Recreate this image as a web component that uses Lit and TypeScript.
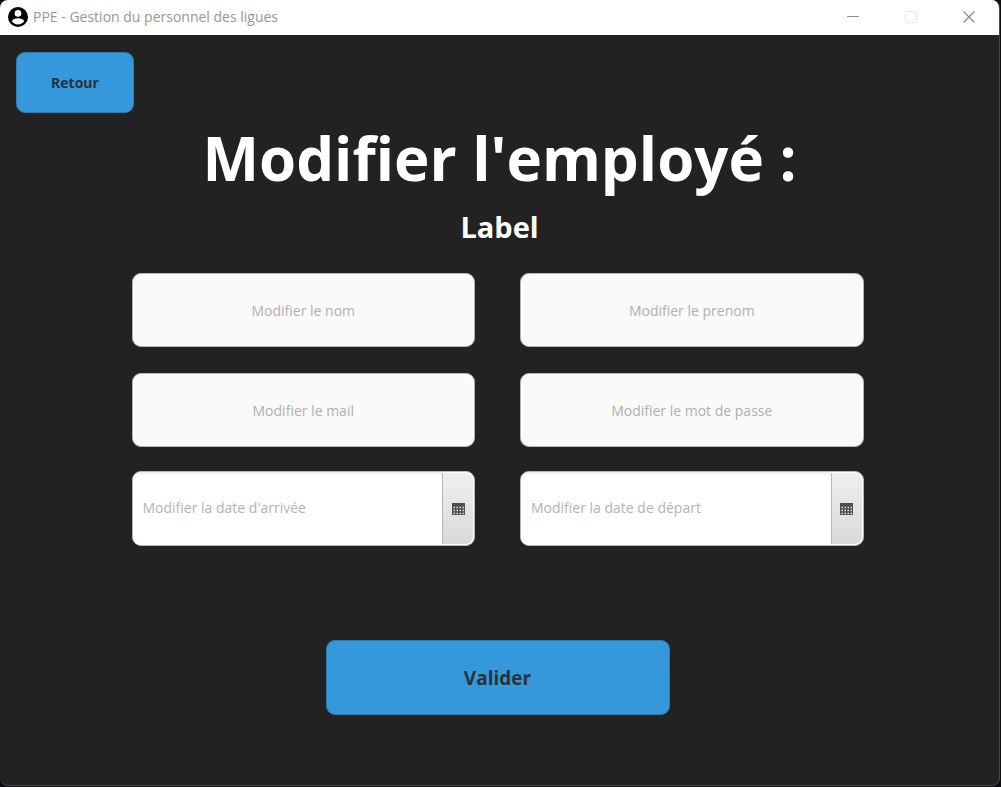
import { LitElement, html, css, svg } from "lit";
import { customElement, property } from "lit/decorators.js";

const calendarDots = [4, 7, 10].flatMap((y) => [2, 5, 8, 11].map((x) => ({ x: x - 0.5, y: y - 0.3 })));

@customElement("date-field")
class DateField extends LitElement {
  @property() label = "";

  static styles = css`
    :host {
      display: block;
    }
    .field {
      display: flex;
      box-sizing: border-box;
      height: 75px;
      border: 1px solid #b5b5b5;
      border-radius: 9px;
      background: #fff;
      overflow: hidden;
    }
    .text {
      flex: 1;
      min-width: 0;
      border: 0;
      padding: 0 10px 2px;
      background: linear-gradient(#ececec, #fff 4px);
      font: 14px "Open Sans", "Noto Sans", sans-serif;
      color: #333;
      outline: none;
    }
    .text::placeholder {
      color: #b3b3b3;
      opacity: 1;
    }
    .pick {
      display: grid;
      place-items: center;
      width: 31px;
      margin: 1px 1px 1px 0;
      padding: 0;
      border: 0;
      border-left: 1px solid #b8b8b8;
      border-radius: 0 8px 8px 0;
      background: linear-gradient(#efefef, #d9d9d9);
    }
    .icon {
      display: block;
    }
  `;

  render() {
    return html`
      <div class="field">
        <input class="text" type="text" placeholder=${this.label} aria-label=${this.label} />
        <button class="pick" type="button" aria-label="Choisir une date">
          <svg class="icon" width="13" height="12" viewBox="0 0 13 12">
            <rect width="13" height="12" fill="#4e4e4e" />
            ${calendarDots.map((d) => svg`<rect x=${d.x} y=${d.y} width="1.5" height="1.5" fill="#e2e2e2" />`)}
          </svg>
        </button>
      </div>
    `;
  }
}

@customElement("app-root")
class AppRoot extends LitElement {
  static styles = css`
    :host {
      display: block;
      min-height: 100vh;
      background: #0d0d14;
      font-family: "Open Sans", "Noto Sans", sans-serif;
    }
    .window {
      display: flex;
      flex-direction: column;
      box-sizing: border-box;
      min-height: calc(100vh - 1px);
      margin-right: 1px;
      border: solid #47474b;
      border-width: 0 1px 1px 0;
      border-radius: 8px;
      background: #222;
      overflow: hidden;
    }
    .bar {
      display: flex;
      align-items: center;
      box-sizing: border-box;
      height: 35px;
      padding: 0 1px 2px 8px;
      background: #fff;
      color: #969696;
      font-size: 14px;
    }
    .title {
      flex: 1;
      margin-left: 5px;
    }
    .avatar {
      display: block;
    }
    .control {
      display: grid;
      place-items: center;
      width: 58px;
      height: 32px;
      padding: 0;
      border: 0;
      background: none;
    }
    .content {
      padding: 17px 16px;
    }
    .action {
      display: block;
      box-sizing: border-box;
      border: 1px solid #2d7ab0;
      border-radius: 9px;
      background: #3498db;
      color: #2a3238;
      font-family: inherit;
      font-weight: 700;
    }
    .back {
      width: 118px;
      height: 61px;
      font-size: 14px;
    }
    .heading,
    .name {
      margin: 0;
      text-align: center;
      color: #fff;
      font-weight: 700;
    }
    .heading {
      font-size: 60px;
      line-height: 90px;
    }
    .name {
      font-size: 29px;
      line-height: 48px;
    }
    .form {
      max-width: 732px;
      margin: 22px auto 0;
      padding-right: 4px;
    }
    .fields {
      display: grid;
      grid-template-columns: 1fr 1fr;
      gap: 26px 45px;
    }
    .input {
      box-sizing: border-box;
      width: 100%;
      height: 74px;
      padding: 0 10px;
      border: 1px solid #b5b5b5;
      border-radius: 9px;
      background: #fafafa;
      color: #333;
      font: 14px "Open Sans", "Noto Sans", sans-serif;
      text-align: center;
      outline: none;
    }
    .input::placeholder {
      color: #b0b0b0;
      opacity: 1;
    }
    .dates {
      margin-top: 24px;
    }
    .submit {
      width: 344px;
      height: 75px;
      margin: 94px auto 0;
      font-size: 19px;
    }
  `;

  render() {
    return html`
      <div class="window">
        <header class="bar">
          <svg class="avatar" width="20" height="20" viewBox="0 0 20 20">
            <circle cx="10" cy="10" r="10" fill="#000" />
            <circle cx="10" cy="6.4" r="3.3" fill="#fff" />
            <path d="M3.8 14.2C4.6 12 7.6 11.3 10 11.3s5.4.7 6.2 2.9C14.9 16.2 12.6 17.4 10 17.4S5.1 16.2 3.8 14.2z" fill="#fff" />
          </svg>
          <span class="title">PPE - Gestion du personnel des ligues</span>
          <button class="control" type="button" aria-label="Réduire">
            <svg width="12" height="12"><path d="M0 5.5h12" stroke="#8c8c8c" /></svg>
          </button>
          <button class="control" type="button" aria-label="Agrandir" disabled>
            <svg width="12" height="12"><rect x=".5" y=".5" width="11" height="11" rx="1" fill="none" stroke="#e6e6e6" /></svg>
          </button>
          <button class="control" type="button" aria-label="Fermer">
            <svg width="12" height="12"><path d="M.5.5l11 11M11.5.5l-11 11" stroke="#858585" stroke-width="1.1" /></svg>
          </button>
        </header>
        <main class="content">
          <button class="action back" type="button">Retour</button>
          <h1 class="heading">Modifier l'employé :</h1>
          <h2 class="name">Label</h2>
          <form class="form">
            <div class="fields">
              <input class="input" type="text" placeholder="Modifier le nom" aria-label="Modifier le nom" />
              <input class="input" type="text" placeholder="Modifier le prenom" aria-label="Modifier le prenom" />
              <input class="input" type="email" placeholder="Modifier le mail" aria-label="Modifier le mail" />
              <input class="input" type="password" placeholder="Modifier le mot de passe" aria-label="Modifier le mot de passe" />
            </div>
            <div class="fields dates">
              <date-field label="Modifier la date d'arrivée"></date-field>
              <date-field label="Modifier la date de départ"></date-field>
            </div>
            <button class="action submit" type="submit">Valider</button>
          </form>
        </main>
      </div>
    `;
  }
}
